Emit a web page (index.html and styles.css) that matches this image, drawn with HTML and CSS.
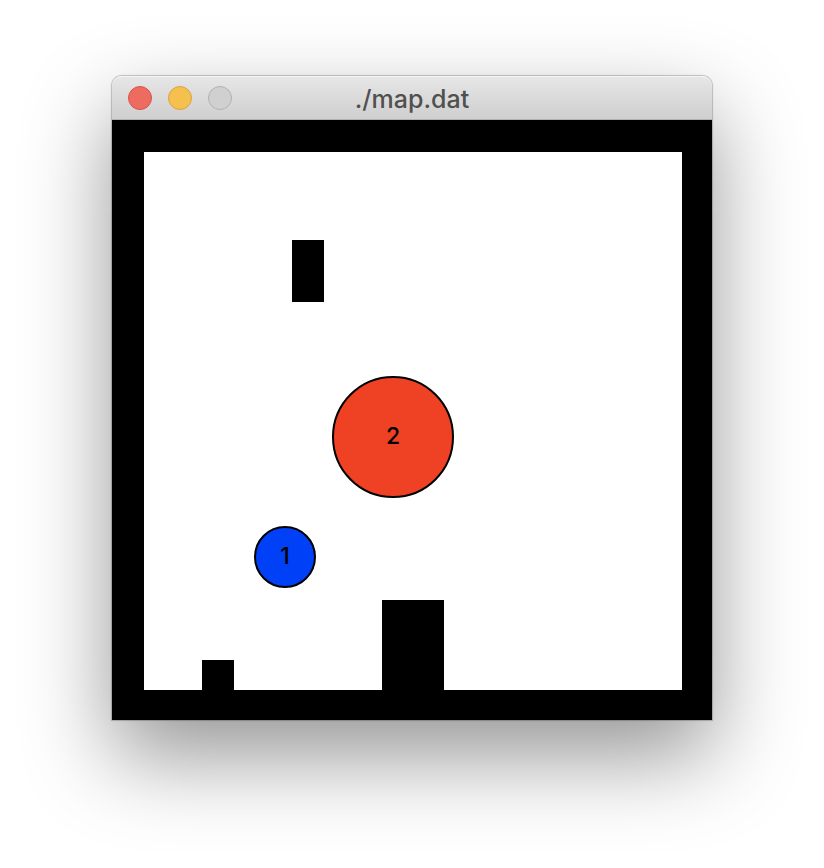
FILE: index.html
```html
<!DOCTYPE html>
<html lang="en">
<head>
  <meta charset="utf-8">
  <meta name="viewport" content="width=device-width, initial-scale=1">
  <title>./map.dat</title>
  <link rel="stylesheet" href="styles.css">
</head>
<body>
  <main class="window">
    <header class="titlebar">
      <div class="controls">
        <button class="control control-close" type="button" aria-label="Close"></button>
        <button class="control control-minimize" type="button" aria-label="Minimize"></button>
        <button class="control control-zoom" type="button" aria-label="Zoom" disabled></button>
      </div>
      <h1 class="title">./map.dat</h1>
    </header>
    <svg class="map" viewBox="0 0 600 600" role="img" aria-label="Map">
      <rect class="wall" width="600" height="600"/>
      <rect class="floor" x="32" y="32" width="538" height="538"/>
      <rect class="wall" x="180" y="120" width="32" height="62"/>
      <rect class="wall" x="90" y="540" width="32" height="30"/>
      <rect class="wall" x="270" y="480" width="62" height="90"/>
      <circle class="robot robot-blue" cx="173" cy="437" r="30"/>
      <text class="label" x="173" y="444">1</text>
      <circle class="robot robot-red" cx="281" cy="317" r="60"/>
      <text class="label" x="281" y="324">2</text>
    </svg>
  </main>
</body>
</html>
```
FILE: styles.css
```css
body {
  margin: 0;
  padding: 76px 112px 148px;
  background: #fff;
}

.window {
  border-radius: 10px 10px 0 0;
  box-shadow:
    0 0 1px 1px rgba(0, 0, 0, 0.22),
    0 36px 88px rgba(0, 0, 0, 0.42);
}

.titlebar {
  display: grid;
  grid-template-columns: 1fr auto 1fr;
  align-items: center;
  box-sizing: border-box;
  height: 44px;
  padding: 0 16px;
  border-top: 1px solid #f4f4f4;
  border-bottom: 1px solid #b1b1b1;
  border-radius: 10px 10px 0 0;
  background: linear-gradient(#e6e6e6, #cfcfcf);
}

.controls {
  display: flex;
  gap: 16px;
}

.control {
  box-sizing: border-box;
  width: 24px;
  height: 24px;
  padding: 0;
  border: 1px solid;
  border-radius: 50%;
}

.control-close {
  border-color: #d9534c;
  background: #ee6b60;
}

.control-minimize {
  border-color: #d9a341;
  background: #f6c04f;
}

.control-zoom {
  border-color: #b1b1b1;
  background: #d0d0d0;
}

.title {
  margin: 0;
  padding-top: 2px;
  color: #505050;
  font: 500 25px/32px Inter, "Liberation Sans", sans-serif;
}

.map {
  display: block;
  width: 100%;
  height: auto;
}

.wall {
  fill: #000;
}

.floor {
  fill: #fff;
}

.robot {
  stroke: #000;
  stroke-width: 2px;
}

.robot-blue {
  fill: #0040f6;
}

.robot-red {
  fill: #ef4124;
}

.label {
  fill: #000;
  font: 500 23px Inter, Helvetica, Arial, sans-serif;
  text-anchor: middle;
}
```
